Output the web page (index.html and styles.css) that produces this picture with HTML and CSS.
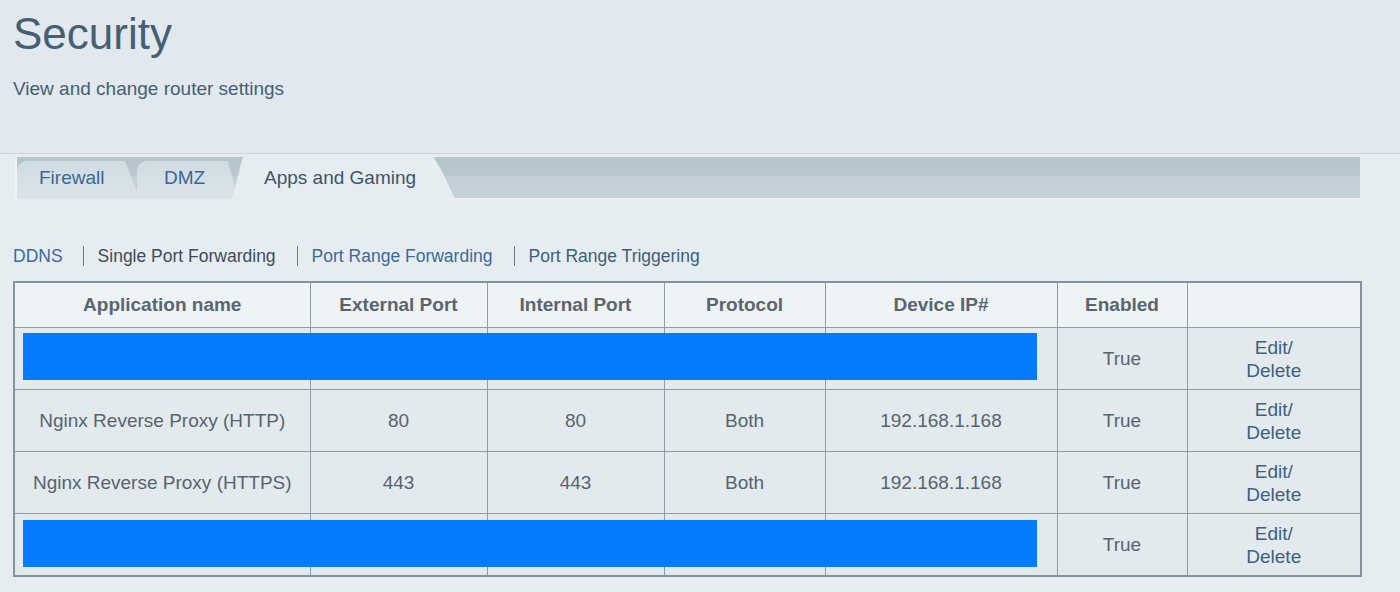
FILE: index.html
```html
<!DOCTYPE html>
<html lang="en">
<head>
<meta charset="utf-8">
<title>Security</title>
<link rel="stylesheet" href="styles.css">
</head>
<body>
<header class="page-head">
  <h1 class="title">Security</h1>
  <p class="subtitle">View and change router settings</p>
</header>

<nav class="tabstrip">
  <div class="tab tab-first">Firewall</div>
  <div class="tab tab-mid">DMZ</div>
  <div class="tab tab-active">Apps and Gaming</div>
</nav>

<div class="subnav">
  <span class="sub-item sub-link">DDNS</span>
  <span class="sub-item sub-current">Single Port Forwarding</span>
  <span class="sub-item sub-link">Port Range Forwarding</span>
  <span class="sub-item sub-link2">Port Range Triggering</span>
</div>

<div class="table-wrap">
  <table class="rules">
    <colgroup>
      <col class="c1"><col class="c2"><col class="c3"><col class="c4"><col class="c5"><col class="c6"><col class="c7">
    </colgroup>
    <thead>
      <tr>
        <th>Application name</th>
        <th>External Port</th>
        <th>Internal Port</th>
        <th>Protocol</th>
        <th>Device IP#</th>
        <th>Enabled</th>
        <th></th>
      </tr>
    </thead>
    <tbody>
      <tr>
        <td></td><td></td><td></td><td></td><td></td>
        <td>True</td>
        <td class="act">Edit/<br>Delete</td>
      </tr>
      <tr>
        <td>Nginx Reverse Proxy (HTTP)</td>
        <td>80</td>
        <td>80</td>
        <td>Both</td>
        <td>192.168.1.168</td>
        <td>True</td>
        <td class="act">Edit/<br>Delete</td>
      </tr>
      <tr>
        <td>Nginx Reverse Proxy (HTTPS)</td>
        <td>443</td>
        <td>443</td>
        <td>Both</td>
        <td>192.168.1.168</td>
        <td>True</td>
        <td class="act">Edit/<br>Delete</td>
      </tr>
      <tr>
        <td></td><td></td><td></td><td></td><td></td>
        <td>True</td>
        <td class="act">Edit/<br>Delete</td>
      </tr>
    </tbody>
  </table>
  <div class="redact redact-1"></div>
  <div class="redact redact-2"></div>
</div>
</body>
</html>
```

FILE: styles.css
```css
html, body {
  margin: 0;
  padding: 0;
}
body {
  background: #e6edf0;
  font-family: "Liberation Sans", Arial, Helvetica, sans-serif;
  width: 1400px;
  height: 592px;
  overflow: hidden;
}

.page-head {
  background: #e1e8ee;
  border-bottom: 1px solid #cbd5db;
  padding: 8px 0 0 13px;
  box-sizing: border-box;
  height: 154px;
}
.title {
  margin: 0;
  font-size: 44px;
  line-height: 52px;
  font-weight: normal;
  color: #465f73;
}
.subtitle {
  margin: 17px 0 0 0;
  font-size: 19px;
  line-height: 24px;
  color: #465f73;
}

.tabstrip {
  margin: 3px 0 0 15px;
  width: 1345px;
  height: 42px;
  box-sizing: border-box;
  background: linear-gradient(#b6c4cc 0, #b9c7cf 45%, #c3cfd6 46%, #c5d1d8 100%);
  border-left: 2px solid #f0f4f6;
  border-bottom: 1px solid #f0f4f6;
  display: flex;
  align-items: flex-end;
}
.tab {
  box-sizing: border-box;
  font-size: 19px;
  line-height: 33px;
  white-space: nowrap;
  border-top-left-radius: 10px;
  margin-bottom: -1px;
  height: 38px;
}
.tab-first {
  width: 123px;
  padding-left: 22px;
  color: #3b6796;
  background: linear-gradient(#d0dce2, #dbe4e9);
  clip-path: polygon(0 0, calc(100% - 15px) 0, 100% 100%, 0 100%);
  position: relative;
  z-index: 1;
}
.tab-mid {
  width: 101px;
  margin-left: -3px;
  padding-left: 27px;
  color: #3b6796;
  background: linear-gradient(#d0dce2, #dbe4e9);
  clip-path: polygon(0 0, calc(100% - 10px) 0, 100% 100%, 0 100%);
  position: relative;
  z-index: 2;
}
.tab-active {
  width: 223px;
  margin-left: -6px;
  height: 43px;
  padding-top: 5px;
  padding-left: 32px;
  color: #3f5466;
  background: #e6edf0;
  border-top-left-radius: 0;
  clip-path: polygon(11px 0, calc(100% - 22px) 0, calc(100% - 12px) 40%, 100% 100%, 0 100%);
  position: relative;
  z-index: 3;
}

.subnav {
  margin: 47px 0 0 13px;
  display: flex;
  font-size: 17.5px;
  line-height: 20px;
}
.sub-item {
  white-space: nowrap;
}
.sub-item + .sub-item {
  margin-left: 21px;
  padding-left: 14px;
  border-left: 1px solid #6b7a86;
}
.sub-item.sub-current {
  margin-left: 20px;
}
.sub-link { color: #3a6a9c; }
.sub-current { color: #3d4c59; }
.sub-link2 { color: #3f5e7c; }

.table-wrap {
  position: relative;
  margin: 15px 0 0 13px;
  width: 1347px;
}
.rules {
  border-collapse: collapse;
  table-layout: fixed;
  width: 1347px;
  border: 2px solid #8592a0;
}
.c1 { width: 296px; }
.c2 { width: 177px; }
.c3 { width: 177px; }
.c4 { width: 161px; }
.c5 { width: 232px; }
.c6 { width: 130px; }
.c7 { width: 174px; }

.rules th, .rules td {
  border: 1px solid #8f9ca7;
  text-align: center;
  padding: 0;
}
.rules th {
  height: 44px;
  background: #eef3f6;
  font-size: 19px;
  font-weight: bold;
  color: #5a656e;
}
.rules td {
  height: 61px;
  background: #e3eaee;
  font-size: 19px;
  line-height: 23px;
  color: #57646e;
}
.rules td.act {
  color: #3c6083;
}

.redact {
  position: absolute;
  left: 10px;
  width: 1014px;
  height: 47px;
  background: #057bfe;
}
.redact-1 { top: 52px; }
.redact-2 { top: 239px; }
```
